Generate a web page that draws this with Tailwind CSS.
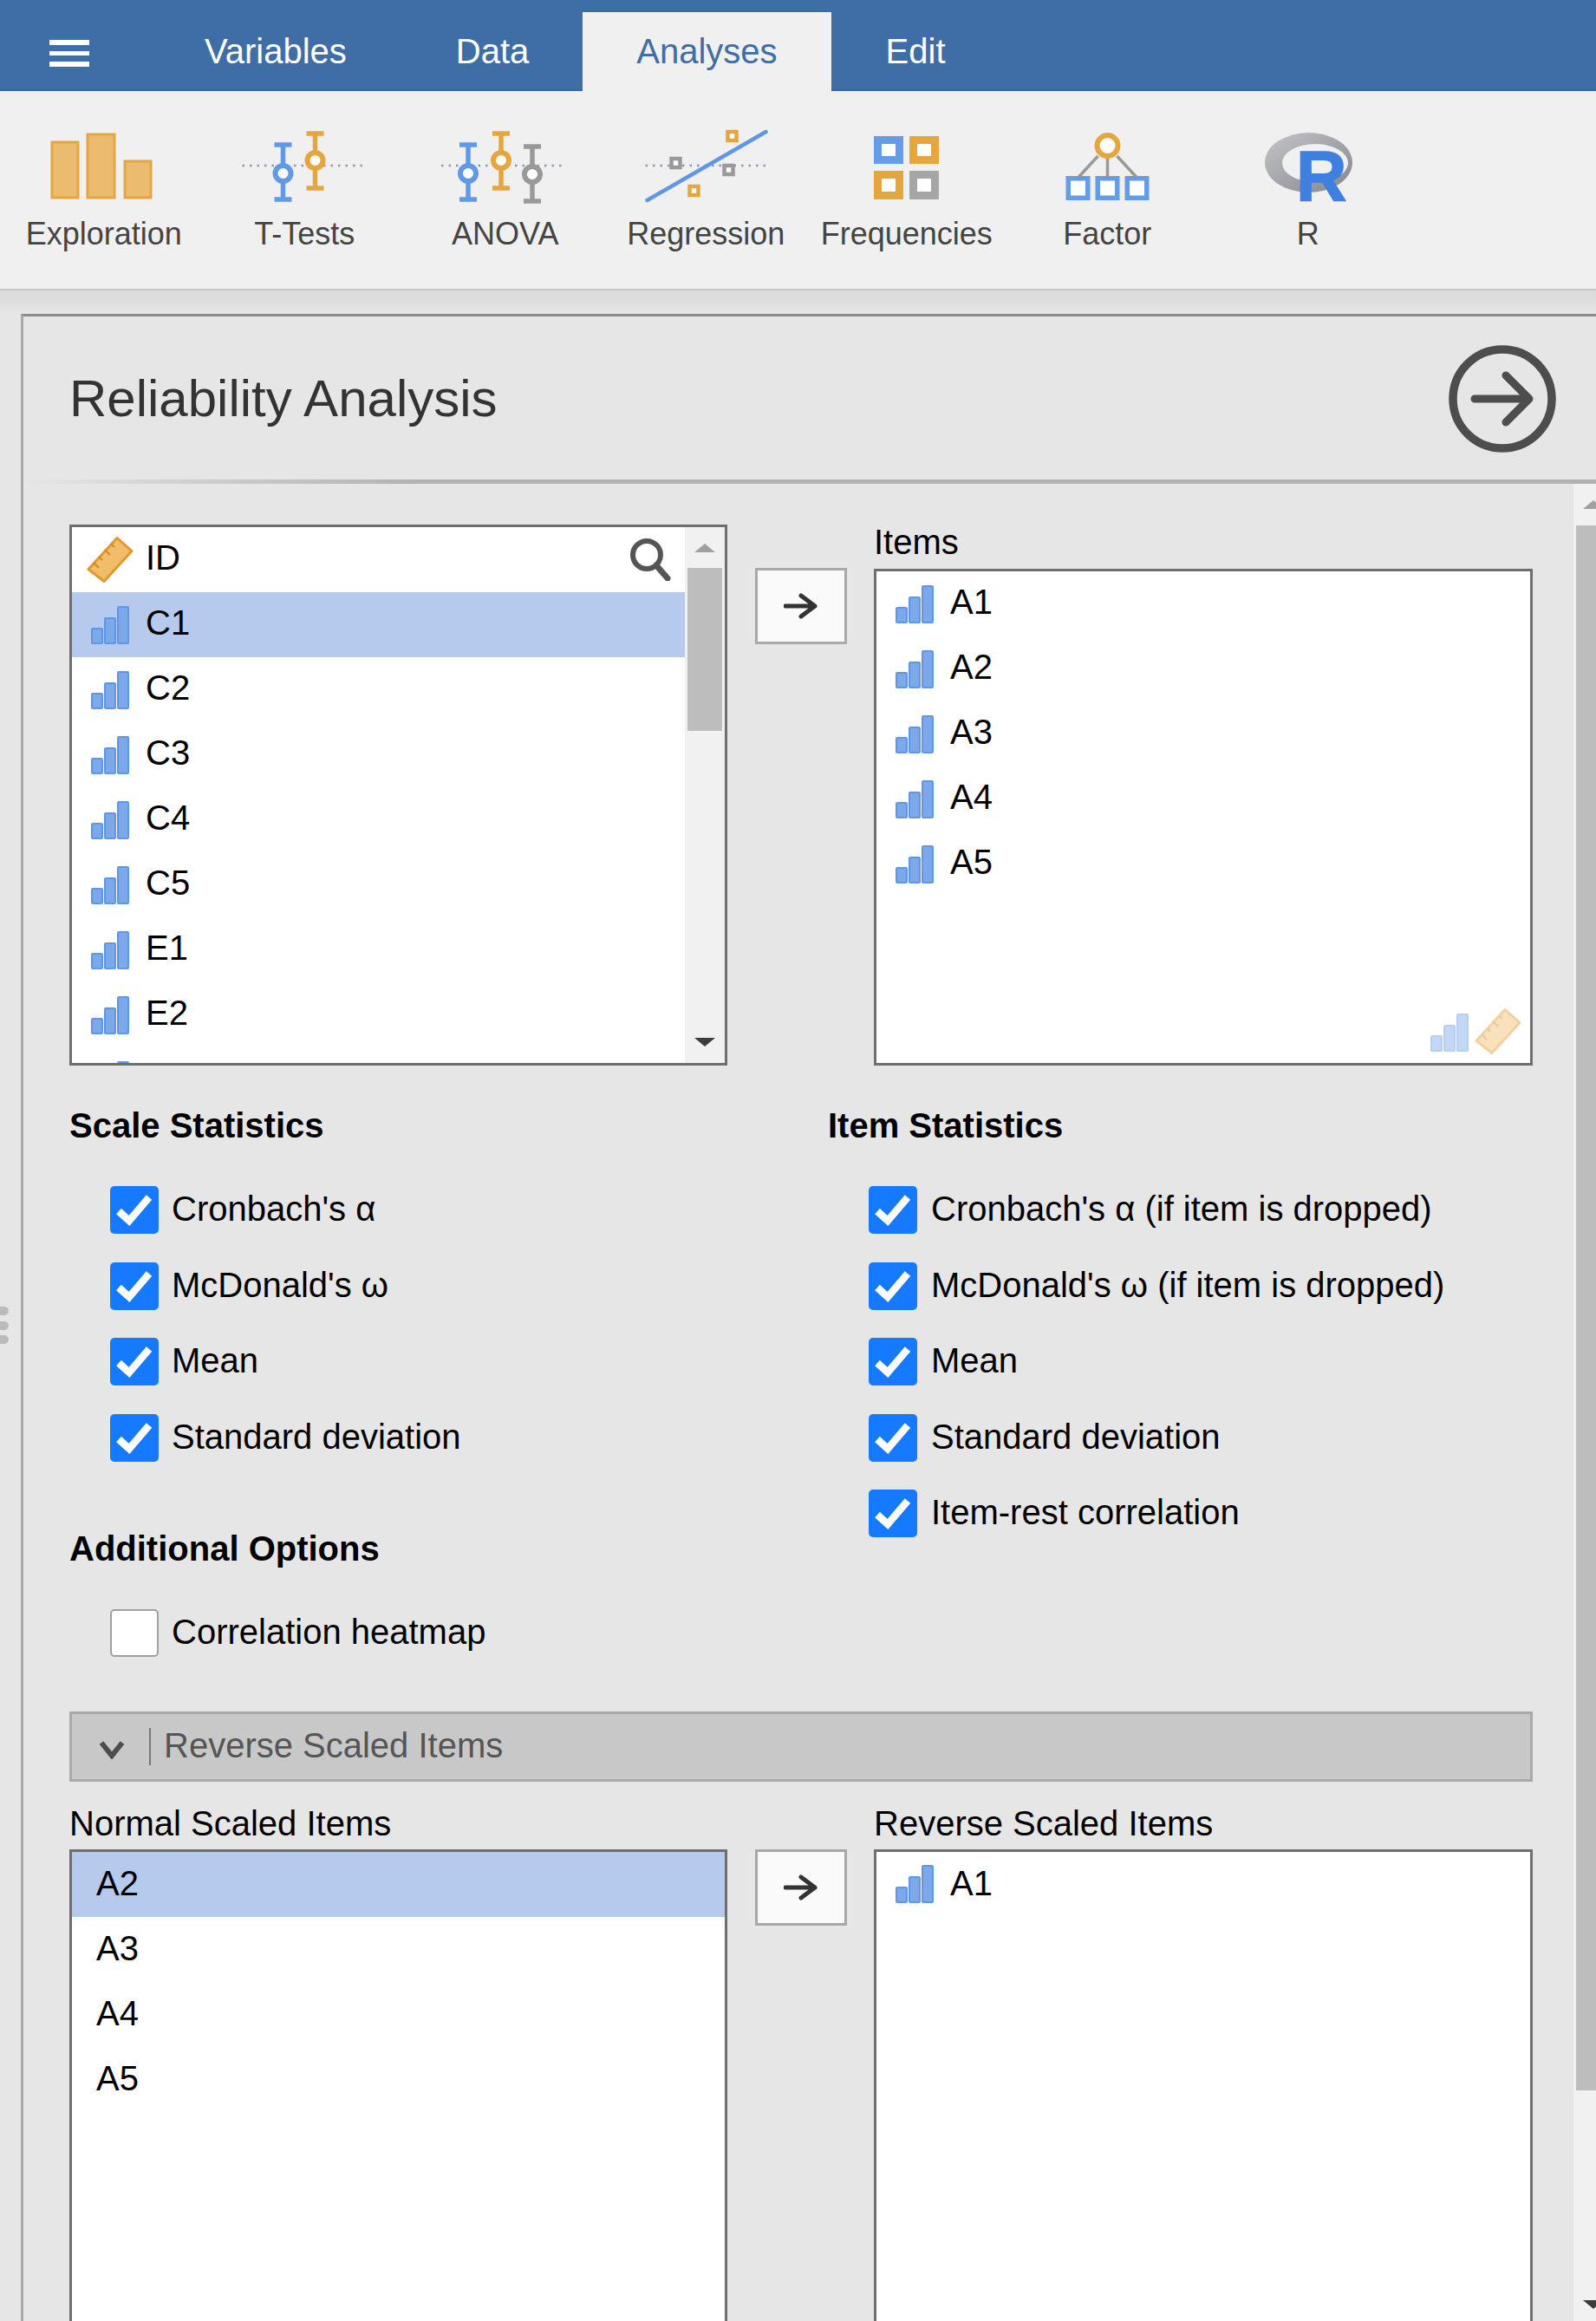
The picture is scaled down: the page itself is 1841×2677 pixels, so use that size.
<!DOCTYPE html>
<html lang="en">
<head>
    <meta charset="UTF-8">
    <title>Reliability Analysis</title>
    <script src="https://cdn.jsdelivr.net/npm/@tailwindcss/browser@4"></script>
</head>
<body class="bg-[#e6e6e6] text-black antialiased font-['Liberation_Sans',Arial,sans-serif]">

    <!-- shared icons -->
    <svg class="hidden">
        <symbol id="bars" viewBox="0 0 44 44">
            <g fill="#7ba9ea" stroke="#5f97e6" stroke-width="2">
                <rect x="1" y="26" width="12" height="17" rx="1"/>
                <rect x="16" y="14" width="12" height="29" rx="1"/>
                <rect x="31" y="1" width="12" height="42" rx="1"/>
            </g>
        </symbol>
        <symbol id="ruler" viewBox="0 0 54 54">
            <path d="M35 1.5 L52 16.5 L20 51.5 L2 37.5 Z" fill="#f0bd69" stroke="#e3982f" stroke-width="3" stroke-linejoin="round"/>
            <g stroke="#d28a2c" stroke-width="2">
                <path d="M8 30 L14 36"/><path d="M14 23 L18 27"/><path d="M21 15 L27 21"/><path d="M28 8 L32 12"/>
            </g>
        </symbol>
        <symbol id="arrow" viewBox="0 0 40 30">
            <path d="M2 15 H36 M20 3 L36 15 L20 27" fill="none" stroke="#333" stroke-width="5" stroke-linecap="round" stroke-linejoin="round"/>
        </symbol>
        <symbol id="check" viewBox="0 0 56 55">
            <path d="M10 29 L22 40 L45 13" fill="none" stroke="#fff" stroke-width="8.5"/>
        </symbol>
    </svg>

    <div class="relative w-[1841px] h-[2677px] overflow-hidden">

        <!-- Top tabs -->
        <header class="flex h-[105px] bg-[#3f6da6] border-b-2 border-[#35649e] text-[40px] text-white">
            <div class="w-[174px] pl-[57px] pt-[46px] flex flex-col gap-[7px]">
                <div class="w-[46px] h-[5.5px] bg-white"></div>
                <div class="w-[46px] h-[5.5px] bg-white"></div>
                <div class="w-[46px] h-[5.5px] bg-white"></div>
            </div>
            <div class="pl-[62px] pr-[64px] pt-[12px] h-[105px] flex items-center">Variables</div>
            <div class="px-[62px] pt-[12px] h-[105px] flex items-center">Data</div>
            <div class="px-[62px] pb-[2px] mt-[14px] h-[91px] flex items-center bg-[#f0f0f0] text-[#3f6da6]">Analyses</div>
            <div class="px-[63px] pt-[12px] h-[105px] flex items-center">Edit</div>
        </header>

        <!-- Analyses toolbar -->
        <nav class="flex h-[230px] pl-[4px] bg-[#f0f0f0] border-b-2 border-[#c8c8c8] text-[36px] text-[#444]">
            <div class="w-[231.5px] pt-[40px] flex flex-col items-center">
                <svg class="w-[231.5px] h-[100px]" viewBox="4 145 231.5 100">
                    <g fill="#ebbb6f" stroke="#e4a640" stroke-width="3">
                        <rect x="60" y="164" width="30" height="64"/>
                        <rect x="101" y="155" width="31" height="73"/>
                        <rect x="144" y="186" width="30" height="42"/>
                    </g>
                </svg>
                <span class="mt-[5px] leading-[40px]">Exploration</span>
            </div>
            <div class="w-[231.5px] pt-[40px] flex flex-col items-center">
                <svg class="w-[231.5px] h-[100px]" viewBox="235.5 145 231.5 100" fill="none">
                    <path d="M279 191 H418" stroke="#8a9bb0" stroke-width="2.5" stroke-dasharray="2.5 6"/>
                    <g stroke="#609ae6" stroke-width="5.5"><path d="M316 167 H336 M326 167 V230 M316 230 H336"/><circle cx="326" cy="200" r="9" fill="#fff" stroke-width="6"/></g>
                    <g stroke="#e6a63e" stroke-width="5.5"><path d="M353 154 H373 M363 154 V217 M353 217 H373"/><circle cx="363" cy="185" r="9" fill="#fff" stroke-width="6"/></g>
                </svg>
                <span class="mt-[5px] leading-[40px]">T-Tests</span>
            </div>
            <div class="w-[231.5px] pt-[40px] flex flex-col items-center">
                <svg class="w-[231.5px] h-[100px]" viewBox="467 145 231.5 100" fill="none">
                    <path d="M509 191 H650" stroke="#8a9bb0" stroke-width="2.5" stroke-dasharray="2.5 6"/>
                    <g stroke="#609ae6" stroke-width="5.5"><path d="M530 167 H550 M540 167 V230 M530 230 H550"/><circle cx="540" cy="200" r="9" fill="#fff" stroke-width="6"/></g>
                    <g stroke="#e6a63e" stroke-width="5.5"><path d="M568 154 H588 M578 154 V217 M568 217 H588"/><circle cx="578" cy="185" r="9" fill="#fff" stroke-width="6"/></g>
                    <g stroke="#999" stroke-width="5.5"><path d="M604 169 H624 M614 169 V232 M604 232 H624"/><circle cx="614" cy="201" r="9" fill="#fff" stroke-width="6"/></g>
                </svg>
                <span class="mt-[5px] leading-[40px]">ANOVA</span>
            </div>
            <div class="w-[231.5px] pt-[40px] flex flex-col items-center">
                <svg class="w-[231.5px] h-[100px]" viewBox="698.5 145 231.5 100" fill="none">
                    <path d="M744 191 H886" stroke="#8a9bb0" stroke-width="2.5" stroke-dasharray="2.5 6"/>
                    <path d="M746 231 L883 152" stroke="#5f97e6" stroke-width="4.5" stroke-linecap="round"/>
                    <g fill="#fff" stroke-width="4.5">
                        <rect x="774" y="183" width="10" height="10" stroke="#999"/>
                        <rect x="835" y="191" width="10" height="10" stroke="#999"/>
                        <rect x="839" y="152" width="10" height="10" stroke="#e6a63e"/>
                        <rect x="795" y="215" width="10" height="10" stroke="#e6a63e"/>
                    </g>
                </svg>
                <span class="mt-[5px] leading-[40px]">Regression</span>
            </div>
            <div class="w-[231.5px] pt-[40px] flex flex-col items-center">
                <svg class="w-[231.5px] h-[100px]" viewBox="930 145 231.5 100" fill="#fff" stroke-width="9">
                    <rect x="1012.5" y="161.5" width="25" height="23" stroke="#659ce8"/>
                    <rect x="1053.5" y="161.5" width="25" height="23" stroke="#e6a63e"/>
                    <rect x="1012.5" y="201.5" width="25" height="24" stroke="#e6a63e"/>
                    <rect x="1053.5" y="201.5" width="25" height="24" stroke="#a6a6a6"/>
                </svg>
                <span class="mt-[5px] leading-[40px]">Frequencies</span>
            </div>
            <div class="w-[231.5px] pt-[40px] flex flex-col items-center">
                <svg class="w-[231.5px] h-[100px]" viewBox="1161.5 145 231.5 100" fill="#fff">
                    <path d="M1266 180 L1243 205 M1277 182 V205 M1288 180 L1311 205" stroke="#999" stroke-width="3.5"/>
                    <circle cx="1277" cy="168" r="12" stroke="#e6a63e" stroke-width="6"/>
                    <g stroke="#659ce8" stroke-width="5.5">
                        <rect x="1231.75" y="205.75" width="22.5" height="22.5"/>
                        <rect x="1265.75" y="205.75" width="22.5" height="22.5"/>
                        <rect x="1299.75" y="205.75" width="22.5" height="22.5"/>
                    </g>
                </svg>
                <span class="mt-[5px] leading-[40px]">Factor</span>
            </div>
            <div class="w-[231.5px] pt-[40px] flex flex-col items-center">
                <svg class="w-[231.5px] h-[100px] overflow-visible" viewBox="1393 145 231.5 100">
                    <defs>
                        <linearGradient id="ring" x1="0" y1="0" x2="1" y2="1">
                            <stop offset="0" stop-color="#c4c5c9"/>
                            <stop offset="1" stop-color="#84868c"/>
                        </linearGradient>
                    </defs>
                    <path fill-rule="evenodd" fill="url(#ring)" d="M1459 187.5 a50.5 34.5 0 1 0 101 0 a50.5 34.5 0 1 0 -101 0 Z M1479 188 a38 22 0 1 0 76 0 a38 22 0 1 0 -76 0 Z"/>
                    <text x="1495" y="231" fill="#3f7fe0" font-size="81" font-weight="700" font-family="Liberation Sans" stroke="#3f7fe0" stroke-width="1.5">R</text>
                </svg>
                <span class="mt-[5px] leading-[40px]">R</span>
            </div>
        </nav>

        <div class="h-[27px] bg-gradient-to-b from-[#d9d9d9] to-[#e6e6e6]"></div>

        <!-- Analysis panel -->
        <main class="ml-[24px] border-l-[3px] border-t-[3px] border-l-[#a8a8a8] border-t-[#8c8c8c]">
            <div class="flex items-center justify-between h-[188px] pl-[53px] pr-[42px]">
                <h1 class="text-[60px] text-[#333] mt-[2px]">Reliability Analysis</h1>
                <svg class="w-[124px] h-[124px] mt-[2px] mr-[4px]" viewBox="0 0 124 124" fill="none" stroke="#4d4d4d">
                    <circle cx="62" cy="62" r="57" stroke-width="9.5"/>
                    <path d="M30 62 H93 M66 35 L93 62 L66 89" stroke-width="9" stroke-linecap="round" stroke-linejoin="round"/>
                </svg>
            </div>
            <div class="h-[5px] bg-gradient-to-r from-[#e6e6e6] to-[#b2b2b2] to-[25%]"></div>

            <div class="flex">
                <div class="w-[1788px] shrink-0 pl-[53px] pr-[47px] pt-[47px] text-[40px]">

                    <!-- Variable supplier -->
                    <div class="grid grid-cols-[791px_137px_760px]">
                        <div class="relative w-[759px] h-[624px] border-[3px] border-[#6e6e6e] bg-white overflow-hidden">
                            <div class="mr-[46px]">
                                <div class="flex items-center h-[75px] pl-[17px]">
                                    <svg class="w-[54px] h-[54px]"><use href="#ruler"/></svg>
                                    <span class="ml-[14px] -mt-[6px]">ID</span>
                                </div>
                                <div class="flex items-center h-[75px] pl-[22px] bg-[#b6caed]">
                                    <svg class="w-[44px] h-[44px]"><use href="#bars"/></svg>
                                    <span class="ml-[19px] -mt-[6px]">C1</span>
                                </div>
                                <div class="flex items-center h-[75px] pl-[22px]">
                                    <svg class="w-[44px] h-[44px]"><use href="#bars"/></svg>
                                    <span class="ml-[19px] -mt-[6px]">C2</span>
                                </div>
                                <div class="flex items-center h-[75px] pl-[22px]">
                                    <svg class="w-[44px] h-[44px]"><use href="#bars"/></svg>
                                    <span class="ml-[19px] -mt-[6px]">C3</span>
                                </div>
                                <div class="flex items-center h-[75px] pl-[22px]">
                                    <svg class="w-[44px] h-[44px]"><use href="#bars"/></svg>
                                    <span class="ml-[19px] -mt-[6px]">C4</span>
                                </div>
                                <div class="flex items-center h-[75px] pl-[22px]">
                                    <svg class="w-[44px] h-[44px]"><use href="#bars"/></svg>
                                    <span class="ml-[19px] -mt-[6px]">C5</span>
                                </div>
                                <div class="flex items-center h-[75px] pl-[22px]">
                                    <svg class="w-[44px] h-[44px]"><use href="#bars"/></svg>
                                    <span class="ml-[19px] -mt-[6px]">E1</span>
                                </div>
                                <div class="flex items-center h-[75px] pl-[22px]">
                                    <svg class="w-[44px] h-[44px]"><use href="#bars"/></svg>
                                    <span class="ml-[19px] -mt-[6px]">E2</span>
                                </div>
                                <!-- next row, only its icon top shows above the fold -->
                                <div class="flex items-center h-[75px] pl-[22px]">
                                    <svg class="w-[44px] h-[44px]"><use href="#bars"/></svg>
                                </div>
                            </div>
                            <!-- search + list scrollbar sit over the list -->
                            <svg class="absolute left-[642px] top-[12px] w-[50px] h-[50px]" viewBox="0 0 50 50" fill="none" stroke="#555">
                                <circle cx="21" cy="20" r="16" stroke-width="6"/>
                                <path d="M32 32 L45 47" stroke-width="7" stroke-linecap="round"/>
                            </svg>
                            <div class="absolute right-0 top-0 bottom-0 w-[46px] bg-[#f1f1f1] flex flex-col items-center">
                                <div class="h-[47px] flex items-center"><div class="w-0 h-0 border-x-[12px] border-x-transparent border-b-[10px] border-b-[#a0a0a0]"></div></div>
                                <div class="w-[40px] h-[188px] bg-[#bdbdbd]"></div>
                                <div class="flex-1 flex items-end pb-[19px]"><div class="w-0 h-0 border-x-[12px] border-x-transparent border-t-[10px] border-t-[#3c3c3c]"></div></div>
                            </div>
                        </div>

                        <div class="pt-[50px]">
                            <button class="w-[106px] h-[88px] border-[3px] border-[#a8a8a8] bg-[#fafafa] flex items-center justify-center">
                                <svg class="w-[40px] h-[30px]"><use href="#arrow"/></svg>
                            </button>
                        </div>

                        <div>
                            <div class="h-[44px] mb-[7px] leading-[41px]">Items</div>
                            <div class="relative h-[573px] border-[3px] border-[#6e6e6e] bg-white">
                                <div class="flex items-center h-[75px] pl-[22px]">
                                    <svg class="w-[44px] h-[44px]"><use href="#bars"/></svg>
                                    <span class="ml-[19px] -mt-[6px]">A1</span>
                                </div>
                                <div class="flex items-center h-[75px] pl-[22px]">
                                    <svg class="w-[44px] h-[44px]"><use href="#bars"/></svg>
                                    <span class="ml-[19px] -mt-[6px]">A2</span>
                                </div>
                                <div class="flex items-center h-[75px] pl-[22px]">
                                    <svg class="w-[44px] h-[44px]"><use href="#bars"/></svg>
                                    <span class="ml-[19px] -mt-[6px]">A3</span>
                                </div>
                                <div class="flex items-center h-[75px] pl-[22px]">
                                    <svg class="w-[44px] h-[44px]"><use href="#bars"/></svg>
                                    <span class="ml-[19px] -mt-[6px]">A4</span>
                                </div>
                                <div class="flex items-center h-[75px] pl-[22px]">
                                    <svg class="w-[44px] h-[44px]"><use href="#bars"/></svg>
                                    <span class="ml-[19px] -mt-[6px]">A5</span>
                                </div>
                                <div class="absolute right-[10px] bottom-[8px] flex items-end gap-[7px] opacity-45">
                                    <svg class="w-[44px] h-[44px] mb-[5px]"><use href="#bars"/></svg>
                                    <svg class="w-[54px] h-[56px]" viewBox="0 0 54 54"><use href="#ruler"/></svg>
                                </div>
                            </div>
                        </div>
                    </div>

                    <!-- Options -->
                    <div class="grid grid-cols-[875px_1fr] mt-[46px]">
                        <div>
                            <h2 class="h-[46px] leading-[46px] font-bold">Scale Statistics</h2>
                            <div class="flex flex-col gap-[32.5px] mt-[47px] pl-[47px]">
                                <label class="flex items-center gap-[15px] h-[55px]">
                                    <span class="w-[56px] h-[55px] rounded-[5px] bg-[#157aff]"><svg class="w-[56px] h-[55px]"><use href="#check"/></svg></span>
                                    <span class="-mt-[3px]">Cronbach's α</span>
                                </label>
                                <label class="flex items-center gap-[15px] h-[55px]">
                                    <span class="w-[56px] h-[55px] rounded-[5px] bg-[#157aff]"><svg class="w-[56px] h-[55px]"><use href="#check"/></svg></span>
                                    <span class="-mt-[3px]">McDonald's ω</span>
                                </label>
                                <label class="flex items-center gap-[15px] h-[55px]">
                                    <span class="w-[56px] h-[55px] rounded-[5px] bg-[#157aff]"><svg class="w-[56px] h-[55px]"><use href="#check"/></svg></span>
                                    <span class="-mt-[3px]">Mean</span>
                                </label>
                                <label class="flex items-center gap-[15px] h-[55px]">
                                    <span class="w-[56px] h-[55px] rounded-[5px] bg-[#157aff]"><svg class="w-[56px] h-[55px]"><use href="#check"/></svg></span>
                                    <span class="-mt-[3px]">Standard deviation</span>
                                </label>
                            </div>
                            <h2 class="h-[46px] leading-[46px] font-bold mt-[77px]">Additional Options</h2>
                            <div class="mt-[47px] pl-[47px]">
                                <label class="flex items-center gap-[15px] h-[55px]">
                                    <span class="w-[56px] h-[55px] rounded-[5px] bg-white border-2 border-[#a0a0a0]"></span>
                                    <span class="-mt-[3px]">Correlation heatmap</span>
                                </label>
                            </div>
                        </div>
                        <div>
                            <h2 class="h-[46px] leading-[46px] font-bold">Item Statistics</h2>
                            <div class="flex flex-col gap-[32.5px] mt-[47px] pl-[47px]">
                                <label class="flex items-center gap-[16px] h-[55px]">
                                    <span class="w-[56px] h-[55px] rounded-[5px] bg-[#157aff]"><svg class="w-[56px] h-[55px]"><use href="#check"/></svg></span>
                                    <span class="-mt-[3px]">Cronbach's α (if item is dropped)</span>
                                </label>
                                <label class="flex items-center gap-[16px] h-[55px]">
                                    <span class="w-[56px] h-[55px] rounded-[5px] bg-[#157aff]"><svg class="w-[56px] h-[55px]"><use href="#check"/></svg></span>
                                    <span class="-mt-[3px]">McDonald's ω (if item is dropped)</span>
                                </label>
                                <label class="flex items-center gap-[16px] h-[55px]">
                                    <span class="w-[56px] h-[55px] rounded-[5px] bg-[#157aff]"><svg class="w-[56px] h-[55px]"><use href="#check"/></svg></span>
                                    <span class="-mt-[3px]">Mean</span>
                                </label>
                                <label class="flex items-center gap-[16px] h-[55px]">
                                    <span class="w-[56px] h-[55px] rounded-[5px] bg-[#157aff]"><svg class="w-[56px] h-[55px]"><use href="#check"/></svg></span>
                                    <span class="-mt-[3px]">Standard deviation</span>
                                </label>
                                <label class="flex items-center gap-[16px] h-[55px]">
                                    <span class="w-[56px] h-[55px] rounded-[5px] bg-[#157aff]"><svg class="w-[56px] h-[55px]"><use href="#check"/></svg></span>
                                    <span class="-mt-[3px]">Item-rest correlation</span>
                                </label>
                            </div>
                        </div>
                    </div>

                    <!-- Reverse Scaled Items -->
                    <div class="flex items-center h-[81px] mt-[63px] border-[3px] border-[#a9a9a9] bg-[#c8c8c8] text-[#555]">
                        <svg class="w-[30px] h-[22px] ml-[31px] mt-[8px]" viewBox="0 0 30 22" fill="none" stroke="#4d4d4d">
                            <path d="M3 3 L15 18 L27 3" stroke-width="6"/>
                        </svg>
                        <div class="w-[2px] h-[43px] ml-[28px] bg-[#777]"></div>
                        <span class="ml-[15px] -mt-[2px]">Reverse Scaled Items</span>
                    </div>

                    <div class="grid grid-cols-[791px_137px_760px] mt-[26px]">
                        <div class="w-[759px]">
                            <div class="h-[46px] mb-[6px] leading-[45px]">Normal Scaled Items</div>
                            <div class="h-[600px] border-[3px] border-[#6e6e6e] bg-white">
                                <div class="flex items-center h-[75px] pb-[3px] pl-[28px] bg-[#b6caed]">A2</div>
                                <div class="flex items-center h-[75px] pb-[3px] pl-[28px]">A3</div>
                                <div class="flex items-center h-[75px] pb-[3px] pl-[28px]">A4</div>
                                <div class="flex items-center h-[75px] pb-[3px] pl-[28px]">A5</div>
                            </div>
                        </div>
                        <div class="pt-[52px]">
                            <button class="w-[106px] h-[88px] border-[3px] border-[#a8a8a8] bg-[#fafafa] flex items-center justify-center">
                                <svg class="w-[40px] h-[30px]"><use href="#arrow"/></svg>
                            </button>
                        </div>
                        <div>
                            <div class="h-[46px] mb-[6px] leading-[45px]">Reverse Scaled Items</div>
                            <div class="h-[600px] border-[3px] border-[#6e6e6e] bg-white">
                                <div class="flex items-center h-[75px] pl-[22px]">
                                    <svg class="w-[44px] h-[44px]"><use href="#bars"/></svg>
                                    <span class="ml-[19px] -mt-[3px]">A1</span>
                                </div>
                            </div>
                        </div>
                    </div>
                </div>

                <!-- Panel scrollbar -->
                <div class="w-[45px] shrink-0 h-[2119px] bg-[#f1f1f1] flex flex-col items-center">
                    <div class="h-[48px] flex items-center"><div class="w-0 h-0 border-x-[12px] border-x-transparent border-b-[10px] border-b-[#a0a0a0]"></div></div>
                    <div class="w-[40px] h-[1805px] bg-[#bdbdbd]"></div>
                    <div class="flex-1 flex items-end pb-[14px]"><div class="w-0 h-0 border-x-[12px] border-x-transparent border-t-[10px] border-t-[#3c3c3c]"></div></div>
                </div>
            </div>
        </main>

        <!-- Side drag handle -->
        <div class="absolute left-[-10px] top-[1507px] flex flex-col gap-[6.5px]">
            <div class="w-[20px] h-[10px] rounded-full bg-[#bbb]"></div>
            <div class="w-[20px] h-[10px] rounded-full bg-[#bbb]"></div>
            <div class="w-[20px] h-[10px] rounded-full bg-[#bbb]"></div>
        </div>
    </div>
</body>
</html>
